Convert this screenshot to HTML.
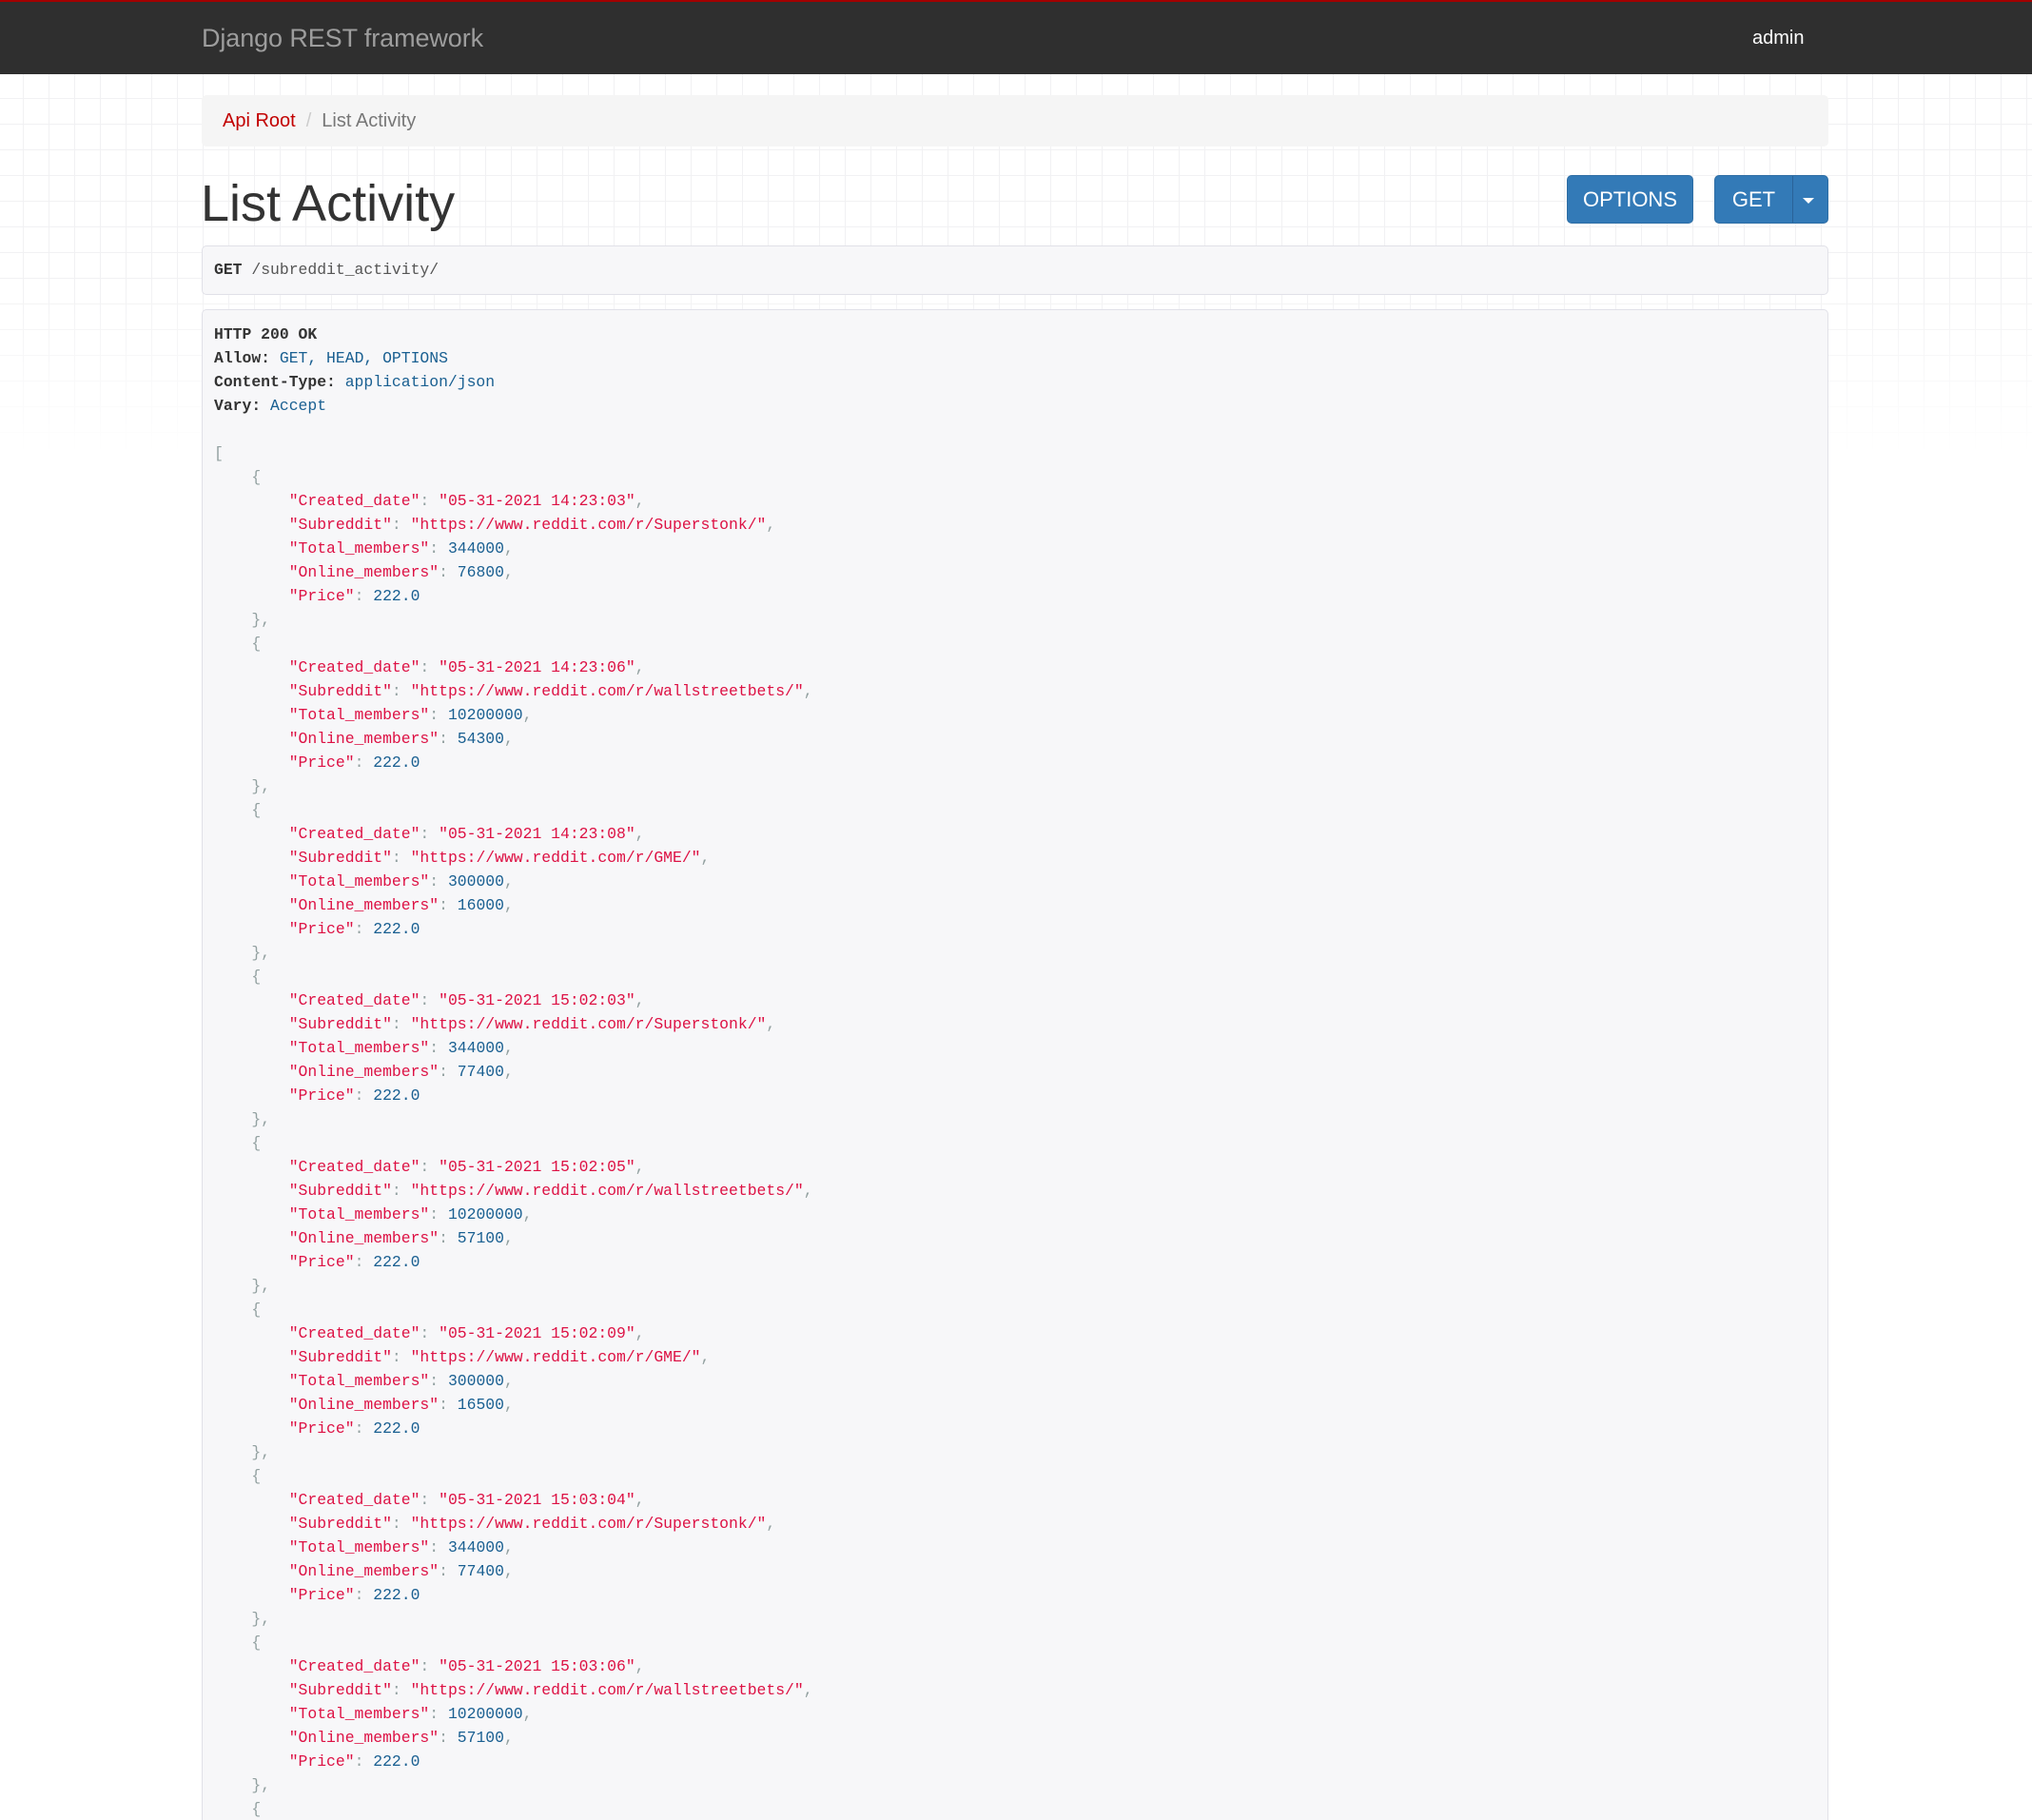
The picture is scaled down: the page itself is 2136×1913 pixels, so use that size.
<!DOCTYPE html>
<html style="width:2136px;height:1913px;overflow:hidden"><head><meta charset="utf-8"><style>
*{box-sizing:border-box}
html,body{margin:0;padding:0}
body{width:2136px;height:1913px;overflow:hidden;background:#fff;font-family:"Liberation Sans",Arial,sans-serif;position:relative}
.grid{position:absolute;left:0;top:78px;width:2136px;height:400px;
background-image:linear-gradient(to right,#f1f1f3 1px,transparent 1px),linear-gradient(to bottom,#f1f1f3 1px,transparent 1px);
background-size:27px 27px;background-position:24px 25px;
-webkit-mask-image:linear-gradient(to bottom,#000 0,#000 55%,transparent 100%);mask-image:linear-gradient(to bottom,#000 0,#000 55%,transparent 100%)}
.nav{position:absolute;left:0;top:0;width:2136px;height:78px;background:#2f2f2f;border-top:2px solid #a30000}
.brand{position:absolute;left:212px;top:23px;font-size:27px;color:#9d9d9d;letter-spacing:-0.1px}
.admin{position:absolute;left:1842px;top:27px;font-size:20px;color:#fff}
.bc{position:absolute;left:212px;top:100px;width:1710px;height:54px;background:#f5f5f5;border-radius:5px;font-size:20px;padding:16px 22px;color:#777}
.bc a{color:#c20000;text-decoration:none}
.bc .sep{color:#ccc;padding:0 11px}
h1{position:absolute;left:211px;top:184px;margin:0;font-weight:400;font-size:54px;color:#333;line-height:60px}
.btn{position:absolute;top:184px;height:51px;background:#337ab7;border:1px solid #2e6da4;border-radius:5px;color:#fff;font-size:22px;line-height:49px;text-align:center}
.caret{position:absolute;left:1895px;top:208px;width:0;height:0;border-left:6px solid transparent;border-right:6px solid transparent;border-top:6px solid #fff}
.req{position:absolute;left:212px;top:258px;width:1710px;height:52px;background:#f7f7f9;border:1px solid #e1e1e8;border-radius:5px;font-family:"Liberation Mono",monospace;font-size:16.4px;line-height:50px;padding-left:12px;color:#333}
.resp{position:absolute;left:212px;top:325px;width:1710px;height:1588px;overflow:hidden;background:#f7f7f9;border:1px solid #e1e1e8;border-bottom:none;border-radius:5px 5px 0 0;padding:13px 0 0 12px}
pre{margin:0;font-family:"Liberation Mono",monospace;font-size:16.4px;line-height:25px;color:#333}
.s{color:#dd1144}.l{color:#195f91}.p{color:#93a1a1}
b{color:#333}
</style></head><body>
<div class="grid"></div>
<div class="nav"><div class="brand">Django REST framework</div><div class="admin">admin</div></div>
<div class="bc"><a>Api Root</a><span class="sep">/</span>List Activity</div>
<h1>List Activity</h1>
<div class="btn" style="left:1647px;width:133px">OPTIONS</div>
<div class="btn" style="left:1802px;width:120px"><span style="position:absolute;left:0;width:81px">GET</span><span style="position:absolute;left:81px;top:0;height:49px;border-left:1px solid #2a6398"></span></div>
<div class="caret"></div>
<div class="req"><b>GET</b> <span style="color:#555">/subreddit_activity/</span></div>
<div class="resp"><pre><b>HTTP 200 OK</b>
<b>Allow:</b> <span class="l">GET, HEAD, OPTIONS</span>
<b>Content-Type:</b> <span class="l">application/json</span>
<b>Vary:</b> <span class="l">Accept</span>

<span class="p">[</span>
    <span class="p">{</span>
        <span class="s">"Created_date"</span><span class="p">:</span> <span class="s">"05-31-2021 14:23:03"</span><span class="p">,</span>
        <span class="s">"Subreddit"</span><span class="p">:</span> <span class="s">"https://www.reddit.com/r/Superstonk/"</span><span class="p">,</span>
        <span class="s">"Total_members"</span><span class="p">:</span> <span class="l">344000</span><span class="p">,</span>
        <span class="s">"Online_members"</span><span class="p">:</span> <span class="l">76800</span><span class="p">,</span>
        <span class="s">"Price"</span><span class="p">:</span> <span class="l">222.0</span>
    <span class="p">},</span>
    <span class="p">{</span>
        <span class="s">"Created_date"</span><span class="p">:</span> <span class="s">"05-31-2021 14:23:06"</span><span class="p">,</span>
        <span class="s">"Subreddit"</span><span class="p">:</span> <span class="s">"https://www.reddit.com/r/wallstreetbets/"</span><span class="p">,</span>
        <span class="s">"Total_members"</span><span class="p">:</span> <span class="l">10200000</span><span class="p">,</span>
        <span class="s">"Online_members"</span><span class="p">:</span> <span class="l">54300</span><span class="p">,</span>
        <span class="s">"Price"</span><span class="p">:</span> <span class="l">222.0</span>
    <span class="p">},</span>
    <span class="p">{</span>
        <span class="s">"Created_date"</span><span class="p">:</span> <span class="s">"05-31-2021 14:23:08"</span><span class="p">,</span>
        <span class="s">"Subreddit"</span><span class="p">:</span> <span class="s">"https://www.reddit.com/r/GME/"</span><span class="p">,</span>
        <span class="s">"Total_members"</span><span class="p">:</span> <span class="l">300000</span><span class="p">,</span>
        <span class="s">"Online_members"</span><span class="p">:</span> <span class="l">16000</span><span class="p">,</span>
        <span class="s">"Price"</span><span class="p">:</span> <span class="l">222.0</span>
    <span class="p">},</span>
    <span class="p">{</span>
        <span class="s">"Created_date"</span><span class="p">:</span> <span class="s">"05-31-2021 15:02:03"</span><span class="p">,</span>
        <span class="s">"Subreddit"</span><span class="p">:</span> <span class="s">"https://www.reddit.com/r/Superstonk/"</span><span class="p">,</span>
        <span class="s">"Total_members"</span><span class="p">:</span> <span class="l">344000</span><span class="p">,</span>
        <span class="s">"Online_members"</span><span class="p">:</span> <span class="l">77400</span><span class="p">,</span>
        <span class="s">"Price"</span><span class="p">:</span> <span class="l">222.0</span>
    <span class="p">},</span>
    <span class="p">{</span>
        <span class="s">"Created_date"</span><span class="p">:</span> <span class="s">"05-31-2021 15:02:05"</span><span class="p">,</span>
        <span class="s">"Subreddit"</span><span class="p">:</span> <span class="s">"https://www.reddit.com/r/wallstreetbets/"</span><span class="p">,</span>
        <span class="s">"Total_members"</span><span class="p">:</span> <span class="l">10200000</span><span class="p">,</span>
        <span class="s">"Online_members"</span><span class="p">:</span> <span class="l">57100</span><span class="p">,</span>
        <span class="s">"Price"</span><span class="p">:</span> <span class="l">222.0</span>
    <span class="p">},</span>
    <span class="p">{</span>
        <span class="s">"Created_date"</span><span class="p">:</span> <span class="s">"05-31-2021 15:02:09"</span><span class="p">,</span>
        <span class="s">"Subreddit"</span><span class="p">:</span> <span class="s">"https://www.reddit.com/r/GME/"</span><span class="p">,</span>
        <span class="s">"Total_members"</span><span class="p">:</span> <span class="l">300000</span><span class="p">,</span>
        <span class="s">"Online_members"</span><span class="p">:</span> <span class="l">16500</span><span class="p">,</span>
        <span class="s">"Price"</span><span class="p">:</span> <span class="l">222.0</span>
    <span class="p">},</span>
    <span class="p">{</span>
        <span class="s">"Created_date"</span><span class="p">:</span> <span class="s">"05-31-2021 15:03:04"</span><span class="p">,</span>
        <span class="s">"Subreddit"</span><span class="p">:</span> <span class="s">"https://www.reddit.com/r/Superstonk/"</span><span class="p">,</span>
        <span class="s">"Total_members"</span><span class="p">:</span> <span class="l">344000</span><span class="p">,</span>
        <span class="s">"Online_members"</span><span class="p">:</span> <span class="l">77400</span><span class="p">,</span>
        <span class="s">"Price"</span><span class="p">:</span> <span class="l">222.0</span>
    <span class="p">},</span>
    <span class="p">{</span>
        <span class="s">"Created_date"</span><span class="p">:</span> <span class="s">"05-31-2021 15:03:06"</span><span class="p">,</span>
        <span class="s">"Subreddit"</span><span class="p">:</span> <span class="s">"https://www.reddit.com/r/wallstreetbets/"</span><span class="p">,</span>
        <span class="s">"Total_members"</span><span class="p">:</span> <span class="l">10200000</span><span class="p">,</span>
        <span class="s">"Online_members"</span><span class="p">:</span> <span class="l">57100</span><span class="p">,</span>
        <span class="s">"Price"</span><span class="p">:</span> <span class="l">222.0</span>
    <span class="p">},</span>
    <span class="p">{</span>
</pre></div>
</body></html>
